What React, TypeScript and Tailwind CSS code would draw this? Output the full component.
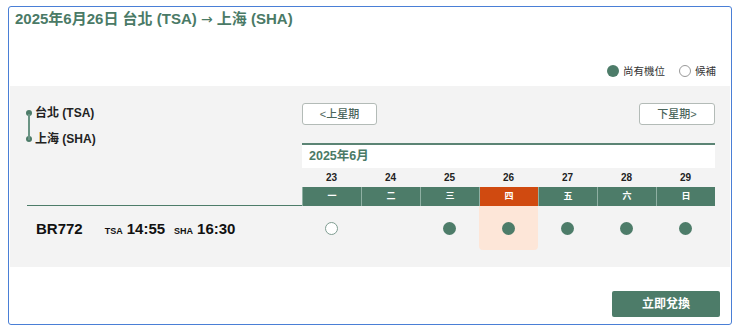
const GREEN = "bg-[#4d7c69]";

const DAYS = [
  { date: 23, label: "一", status: "waitlist" },
  { date: 24, label: "二", status: "none" },
  { date: 25, label: "三", status: "open" },
  { date: 26, label: "四", status: "open", selected: true },
  { date: 27, label: "五", status: "open" },
  { date: 28, label: "六", status: "open" },
  { date: 29, label: "日", status: "open" },
];

const font = {
  fontFamily: '"Liberation Sans", "Noto Sans CJK TC", sans-serif',
};

const Seat = ({ status }: { status: string }) => {
  if (status === "open")
    return <span className={`block h-[13px] w-[13px] rounded-full ${GREEN}`} />;
  if (status === "waitlist")
    return <span className="block h-[13px] w-[13px] rounded-full border border-[#7f9d91] bg-white" />;
  return null;
};

export default function App() {
  return (
    <div className="h-[330px] w-[740px] bg-white pl-[8px] pt-[6px]" style={font}>
      <div className="flex h-[319px] w-[724px] flex-col rounded-[3px] border border-[#4a7fd6] bg-white">
        <h1 className="pl-[6px] pt-[2px] text-[15px] font-semibold leading-[20px] text-[#4a7a66]">
          2025年6月26日 台北 (TSA){" "}
          <span className="font-['DejaVu_Sans'] text-[14px] font-normal">→</span> 上海 (SHA)
        </h1>

        <div className="mt-[35px] flex items-center justify-end gap-[4px] pr-[15px] text-[10.5px] leading-[14px] text-[#333]">
          <span className={`h-[12px] w-[12px] rounded-full ${GREEN}`} />
          <span>尚有機位</span>
          <span className="ml-[10px] h-[12px] w-[12px] rounded-full border border-[#999] bg-white" />
          <span>候補</span>
        </div>

        <div className="mx-[1px] mt-[8px] h-[181px] bg-[#f3f3f3] pl-[17px] pt-[17px]">
          <div className="grid grid-cols-[275px_413px]">
            <div className="flex flex-col border-b border-[#4d7c69]">
              <div className="relative ml-[1px] flex flex-col gap-[12px] pt-[3px]">
                <span className="absolute left-0 top-[11px] h-[26px] w-[2px] bg-[#6a9484]" />
                <div className="flex items-center gap-[3px] text-[12px] font-bold leading-[14px] text-[#222]">
                  <span className="-ml-[2px] h-[6px] w-[6px] rounded-full bg-[#4d7c69]" />
                  台北 (TSA)
                </div>
                <div className="flex items-center gap-[3px] text-[12px] font-bold leading-[14px] text-[#222]">
                  <span className="-ml-[2px] h-[6px] w-[6px] rounded-full bg-[#4d7c69]" />
                  上海 (SHA)
                </div>
              </div>
            </div>

            <div className="flex flex-col">
              <div className="flex justify-between">
                <button className="h-[22px] w-[75px] rounded-[3px] border border-[#b3bbb7] bg-white text-[11px] font-medium text-[#4b665c]">
                  &lt;上星期
                </button>
                <button className="h-[22px] w-[76px] rounded-[3px] border border-[#b3bbb7] bg-white text-[11px] font-medium text-[#4b665c]">
                  下星期&gt;
                </button>
              </div>
              <div className="mt-[18px] border-t-2 border-[#5b8474] bg-white pl-[7px] text-[12.5px] font-semibold leading-[23px] text-[#4a7a66]">
                2025年6月
              </div>
              <div className="grid grid-cols-7">
                {DAYS.map((d) => (
                  <div key={d.date} className="flex flex-col">
                    <div className="h-[19px] text-center text-[10px] font-bold leading-[19px] text-[#222]">
                      {d.date}
                    </div>
                    <div
                      className={`h-[19px] border-l border-[#8fb0a3] text-center text-[9px] font-bold leading-[19px] text-white first:border-l-0 ${
                        d.selected ? "bg-[#d04a10]" : GREEN
                      }`}
                    >
                      {d.label}
                    </div>
                  </div>
                ))}
              </div>
            </div>

            <div className="flex h-[44px] items-baseline pl-[9px] pt-[12px] text-[#111]">
              <span className="text-[15px] font-bold">BR772</span>
              <span className="ml-[22px] text-[9px] font-bold">TSA</span>
              <span className="ml-[4px] text-[15px] font-bold">14:55</span>
              <span className="ml-[9px] text-[9px] font-bold">SHA</span>
              <span className="ml-[4px] text-[15px] font-bold">16:30</span>
            </div>

            <div className="grid h-[44px] grid-cols-7">
              {DAYS.map((d) => (
                <div
                  key={d.date}
                  className={`flex items-center justify-center ${
                    d.selected ? "rounded-b-[4px] bg-[#fde6d8]" : ""
                  }`}
                >
                  <Seat status={d.status} />
                </div>
              ))}
            </div>
          </div>
        </div>

        <div className="flex justify-end pr-[11px] pt-[24px]">
          <button className={`h-[26px] w-[108px] rounded-[2px] ${GREEN} text-[12px] font-bold text-white`}>
            立即兌換
          </button>
        </div>
      </div>
    </div>
  );
}
